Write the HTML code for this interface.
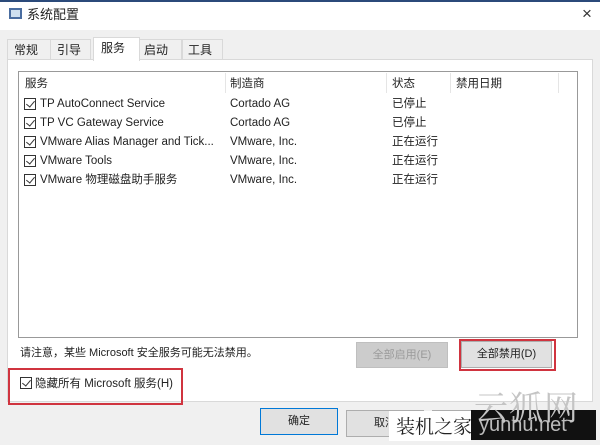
<!DOCTYPE html>
<html><head><meta charset="utf-8"><style>
*{margin:0;padding:0;box-sizing:border-box}
body{width:600px;height:445px;background:#f0f0f0;font-family:"Liberation Sans","Noto Sans CJK SC",sans-serif;font-size:11.5px;color:#222;position:relative;overflow:hidden}
.a{position:absolute;white-space:nowrap;line-height:14px}
.cb{position:absolute;width:12px;height:12px;border:1px solid #333;background:#fff}
.cb:after{content:"";position:absolute;left:3px;top:0px;width:4px;height:7px;border-right:1.5px solid #333;border-bottom:1.5px solid #333;transform:rotate(40deg)}
.btn{position:absolute;border:1px solid #adadad;background:#e1e1e1;text-align:center;font-size:11px}
</style></head><body>
<div class="a" style="left:0;top:0;width:600px;height:30px;background:#fff;border-top:2px solid #2b4a7a"></div>
<div class="a" style="left:9px;top:8px;width:13px;height:11px;border:2px solid #4a6da0;background:#cfe0f0"></div>
<div class="a" style="left:27px;top:8px;font-size:13px">系统配置</div>
<div class="a" style="left:582px;top:7px;font-size:17px;color:#333;font-weight:normal">×</div>
<!-- tabs -->
<div class="a" style="left:7px;top:39px;width:44px;height:21px;border:1px solid #d9d9d9;background:#f0f0f0"></div>
<div class="a" style="left:14px;top:43px;font-size:12px">常规</div>
<div class="a" style="left:50px;top:39px;width:41px;height:21px;border:1px solid #d9d9d9;background:#f0f0f0"></div>
<div class="a" style="left:57px;top:43px;font-size:12px">引导</div>
<div class="a" style="left:139px;top:39px;width:43px;height:21px;border:1px solid #d9d9d9;background:#f0f0f0"></div>
<div class="a" style="left:144px;top:43px;font-size:12px">启动</div>
<div class="a" style="left:182px;top:39px;width:41px;height:21px;border:1px solid #d9d9d9;background:#f0f0f0"></div>
<div class="a" style="left:188px;top:43px;font-size:12px">工具</div>
<div class="a" style="left:7px;top:59px;width:586px;height:343px;background:#fff;border:1px solid #d9d9d9"></div>
<div class="a" style="left:93px;top:37px;width:47px;height:24px;background:#fff;border:1px solid #d9d9d9;border-bottom:none"></div>
<div class="a" style="left:101px;top:41px;font-size:12px">服务</div>
<!-- list -->
<div class="a" style="left:18px;top:71px;width:560px;height:267px;border:1px solid #999"></div>
<div class="a" style="left:225px;top:73px;width:1px;height:20px;background:#e5e5e5"></div>
<div class="a" style="left:386px;top:73px;width:1px;height:20px;background:#e5e5e5"></div>
<div class="a" style="left:450px;top:73px;width:1px;height:20px;background:#e5e5e5"></div>
<div class="a" style="left:558px;top:73px;width:1px;height:20px;background:#e5e5e5"></div>
<div class="a" style="left:25px;top:77px">服务</div>
<div class="a" style="left:230px;top:77px">制造商</div>
<div class="a" style="left:392px;top:77px">状态</div>
<div class="a" style="left:456px;top:77px">禁用日期</div>
<div class="cb" style="left:24px;top:98px"></div><div class="a" style="left:40px;top:97px">TP AutoConnect Service</div><div class="a" style="left:230px;top:97px">Cortado AG</div><div class="a" style="left:392px;top:97px">已停止</div>
<div class="cb" style="left:24px;top:117px"></div><div class="a" style="left:40px;top:116px">TP VC Gateway Service</div><div class="a" style="left:230px;top:116px">Cortado AG</div><div class="a" style="left:392px;top:116px">已停止</div>
<div class="cb" style="left:24px;top:136px"></div><div class="a" style="left:40px;top:135px">VMware Alias Manager and Tick...</div><div class="a" style="left:230px;top:135px">VMware, Inc.</div><div class="a" style="left:392px;top:135px">正在运行</div>
<div class="cb" style="left:24px;top:155px"></div><div class="a" style="left:40px;top:154px">VMware Tools</div><div class="a" style="left:230px;top:154px">VMware, Inc.</div><div class="a" style="left:392px;top:154px">正在运行</div>
<div class="cb" style="left:24px;top:174px"></div><div class="a" style="left:40px;top:173px">VMware 物理磁盘助手服务</div><div class="a" style="left:230px;top:173px">VMware, Inc.</div><div class="a" style="left:392px;top:173px">正在运行</div>
<div class="a" style="left:20px;top:346px;font-size:11px">请注意，某些 Microsoft 安全服务可能无法禁用。</div>
<div class="btn" style="left:356px;top:342px;width:92px;height:26px;line-height:24px;color:#9a9a9a;background:#ccc;border-color:#bfbfbf">全部启用(E)</div>
<div class="a" style="left:459px;top:339px;width:97px;height:32px;border:2px solid #d0343f"></div>
<div class="btn" style="left:461px;top:341px;width:91px;height:27px;line-height:25px">全部禁用(D)</div>
<div class="a" style="left:8px;top:368px;width:175px;height:37px;border:2px solid #d0343f"></div>
<div class="cb" style="left:20px;top:377px"></div>
<div class="a" style="left:35px;top:377px;font-size:11.5px">隐藏所有 Microsoft 服务(H)</div>
<div class="btn" style="left:260px;top:408px;width:78px;height:27px;line-height:25px;border:1px solid #0078d7">确定</div>
<div class="btn" style="left:346px;top:410px;width:78px;height:27px;line-height:25px">取消</div>
<div class="btn" style="left:432px;top:410px;width:78px;height:27px"></div>
<div class="a" style="left:389px;top:411px;width:82px;height:30px;background:#fff;font-family:'Noto Serif CJK SC',serif;font-size:19px;line-height:30px;padding-left:7px">装机之家</div>
<div class="a" style="left:471px;top:410px;width:125px;height:30px;background:#111;color:#bbb;font-size:20px;line-height:30px;padding-left:8px">yunhu.net</div>
<div class="a" style="left:474px;top:386px;font-family:'Noto Serif CJK SC',serif;font-size:34px;line-height:40px;color:#c4c4c4;letter-spacing:1px">云狐网</div>
</body></html>
